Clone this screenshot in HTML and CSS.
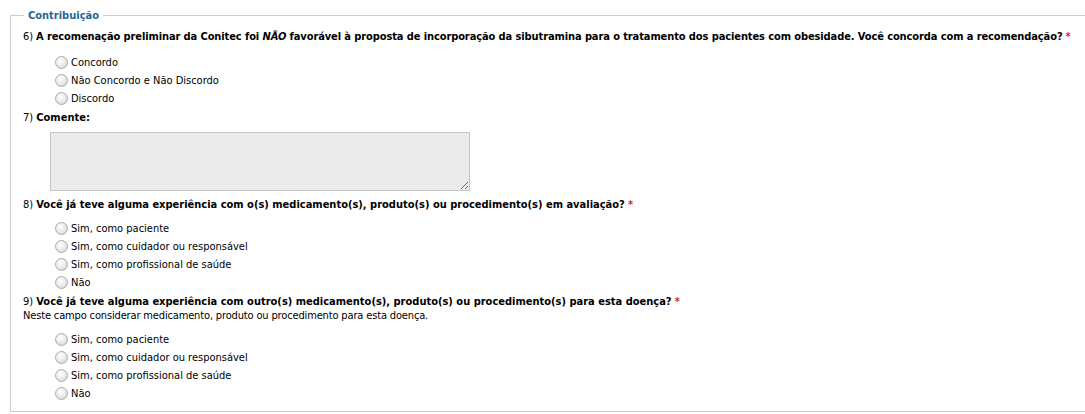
FILE: index.html
```html
<!DOCTYPE html>
<html lang="pt-BR">
<head>
<meta charset="utf-8">
<title>Contribuição</title>
<link rel="stylesheet" href="styles.css">
</head>
<body>
<fieldset class="box">
  <legend class="box-title">Contribuição</legend>

  <div class="q q6">
    <div class="q-title tight">6) <b>A recomenação preliminar da Conitec foi <i>NÃO</i> favorável à proposta de incorporação da sibutramina para o tratamento dos pacientes com obesidade. Você concorda com a recomendação?</b> <span class="req">*</span></div>
    <div class="opts">
      <label class="opt"><input type="radio" name="q6"><span>Concordo</span></label>
      <label class="opt"><input type="radio" name="q6"><span>Não Concordo e Não Discordo</span></label>
      <label class="opt"><input type="radio" name="q6"><span>Discordo</span></label>
    </div>
  </div>

  <div class="q q7">
    <div class="q-title">7) <b>Comente:</b></div>
    <textarea class="comment"></textarea>
  </div>

  <div class="q q8">
    <div class="q-title">8) <b>Você já teve alguma experiência com o(s) medicamento(s), produto(s) ou procedimento(s) em avaliação?</b> <span class="req">*</span></div>
    <div class="opts">
      <label class="opt"><input type="radio" name="q8"><span>Sim, como paciente</span></label>
      <label class="opt"><input type="radio" name="q8"><span>Sim, como cuidador ou responsável</span></label>
      <label class="opt"><input type="radio" name="q8"><span>Sim, como profissional de saúde</span></label>
      <label class="opt"><input type="radio" name="q8"><span>Não</span></label>
    </div>
  </div>

  <div class="q q9">
    <div class="q-title">9) <b>Você já teve alguma experiência com outro(s) medicamento(s), produto(s) ou procedimento(s) para esta doença?</b> <span class="req">*</span></div>
    <div class="q-help">Neste campo considerar medicamento, produto ou procedimento para esta doença.</div>
    <div class="opts">
      <label class="opt"><input type="radio" name="q9"><span>Sim, como paciente</span></label>
      <label class="opt"><input type="radio" name="q9"><span>Sim, como cuidador ou responsável</span></label>
      <label class="opt"><input type="radio" name="q9"><span>Sim, como profissional de saúde</span></label>
      <label class="opt"><input type="radio" name="q9"><span>Não</span></label>
    </div>
  </div>
</fieldset>
</body>
</html>
```

FILE: styles.css
```css
html, body {
  margin: 0;
  padding: 0;
  background: #fff;
  overflow: hidden;
}
body {
  font-family: "DejaVu Sans Condensed", "DejaVu Sans", Verdana, sans-serif;
  font-size: 11px;
  color: #000;
  width: 1085px;
  height: 414px;
}
.box {
  margin: 9px -30px 0 10px;
  padding: 0 12px 9px 12px;
  border: 1px solid #c8cfd5;
  min-width: 0;
}
.box-title {
  margin-left: 1px;
  padding: 0 4px;
  font-weight: bold;
  color: #24679a;
  line-height: 13px;
}
.q-title, .q-help {
  line-height: 14px;
  white-space: nowrap;
}
.q-title.tight { letter-spacing: -0.1px; }
.q-help { letter-spacing: -0.15px; }
.q-title b { font-weight: bold; }
.q-title i { font-style: italic; }
.req { color: #e8202a; font-weight: bold; }
.q6 { margin-top: 8px; }
.q7 { margin-top: 4px; }
.q8 { margin-top: 7px; }
.q9 { margin-top: 4px; }
.q8 .opts { margin-top: 7px; }
.q9 .opts { margin-top: 7px; }
.opts {
  display: flex;
  flex-direction: column;
  padding-left: 32px;
  margin-top: 9px;
}
.opt {
  display: flex;
  align-items: center;
  height: 18px;
  white-space: nowrap;
}
.opt input {
  appearance: none;
  -webkit-appearance: none;
  width: 13px;
  height: 13px;
  margin: 0 3px 0 0;
  border-radius: 50%;
  border: 1px solid #ababab;
  background: radial-gradient(circle at 40% 35%, #ffffff 0, #ececec 45%, #cdcdcd 100%);
  box-sizing: border-box;
  flex: none;
}
.comment {
  display: block;
  margin: 7px 0 0 27px;
  width: 420px;
  height: 59px;
  box-sizing: border-box;
  border: 1px solid #c2c6cb;
  background: #ebebeb;
  resize: both;
  padding: 2px;
  font-family: inherit;
  font-size: 11px;
}
```
